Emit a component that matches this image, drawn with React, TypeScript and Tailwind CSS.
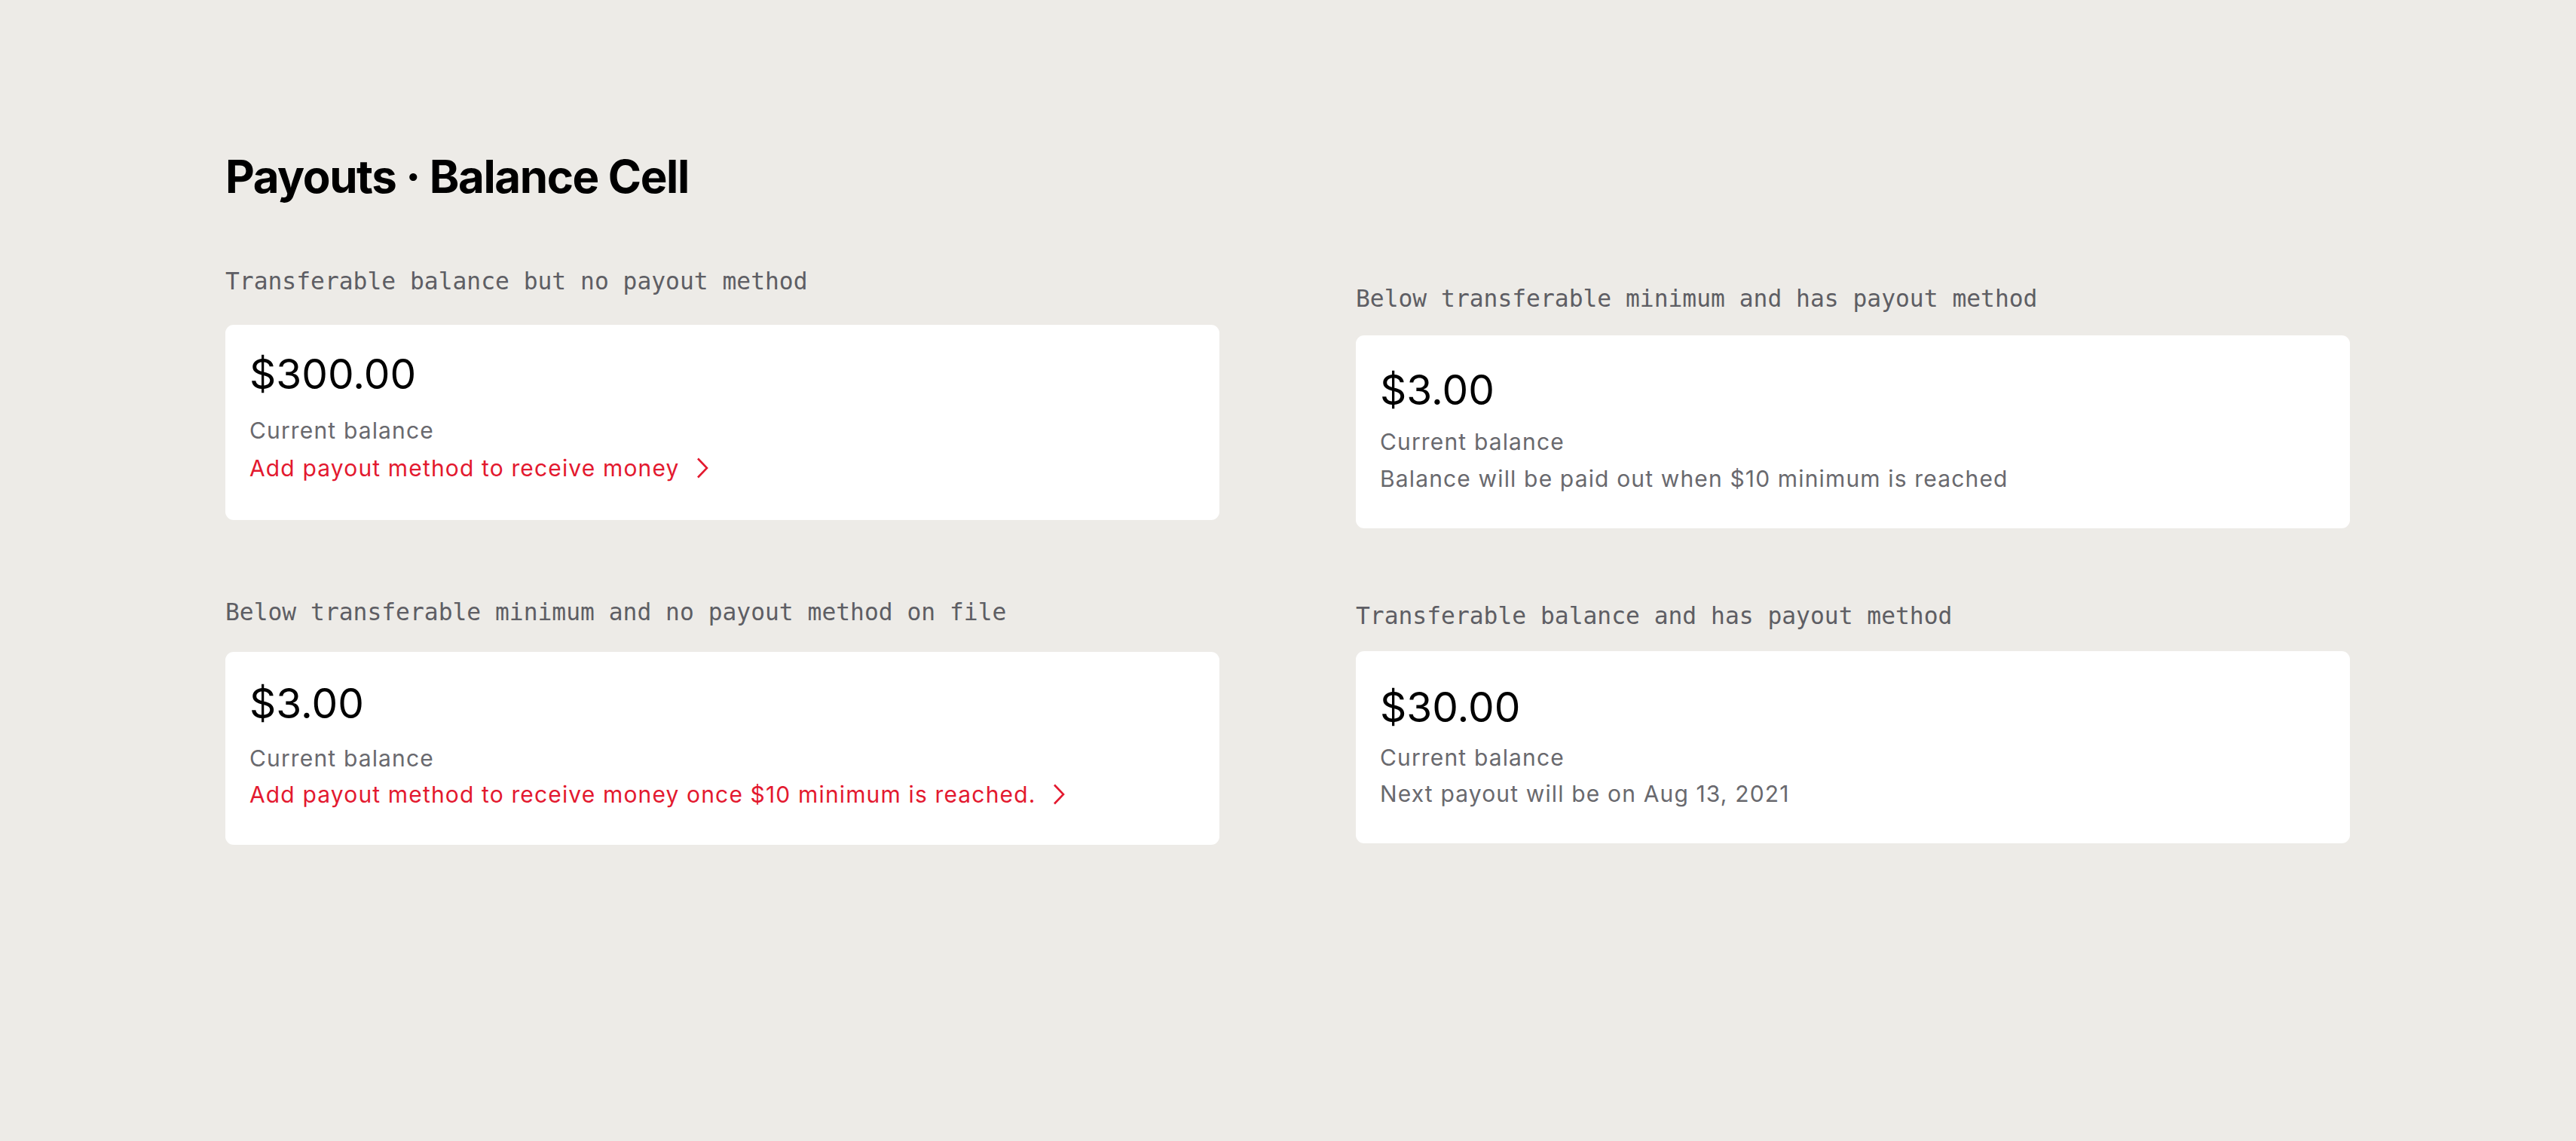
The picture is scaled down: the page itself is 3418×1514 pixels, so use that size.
import React from "react";

const Chevron = () => (
  <svg
    width="16"
    height="28"
    viewBox="0 0 16 28"
    fill="none"
    className="ml-[22px] shrink-0"
    aria-hidden="true"
  >
    <path d="M2 1.5 L14 14 L2 26.5" stroke="#e3192f" strokeWidth="2.6" strokeLinecap="butt" strokeLinejoin="miter" />
  </svg>
);

const monoLabel =
  "font-['DejaVu_Sans_Mono','Liberation_Mono',monospace] text-[31.3px] leading-[40px] text-[#5e5e64]";

const body = "text-[30px] tracking-[1.15px]";

export default function App() {
  return (
    <div className="min-h-[1514px] w-full bg-[#edebe7] font-['Inter','Noto_Sans',sans-serif] text-black">
      <div className="pl-[299px] pr-[300px] pt-[204px]">
        <h1 className="text-[60px] font-bold leading-[60px] tracking-[-1.4px] text-black">
          Payouts · Balance Cell
        </h1>

        <div className="mt-[89px] grid grid-cols-2 gap-x-[181px] items-start">
          {/* Row 1 left */}
          <div className="flex flex-col">
            <div className={monoLabel}>Transferable balance but no payout method</div>
            <div className="mt-[38px] rounded-[11px] bg-white pl-[32px] pt-[38px] pb-[44px]">
              <div className="text-[55px] leading-[55px] text-black">$300.00</div>
              <div className={`mt-[22px] ${body} leading-[50px] text-[#69696e]`}>Current balance</div>
              <div className={`flex items-center ${body} leading-[50px] text-[#e3192f]`}>
                <span>Add payout method to receive money</span>
                <Chevron />
              </div>
            </div>
          </div>

          {/* Row 1 right */}
          <div className="mt-[23px] flex flex-col">
            <div className={monoLabel}>Below transferable minimum and has payout method</div>
            <div className="mt-[29px] rounded-[11px] bg-white pl-[32px] pt-[45px] pb-[41px]">
              <div className="text-[55px] leading-[55px] text-black">$3.00</div>
              <div className={`mt-[17px] ${body} leading-[49px] text-[#69696e]`}>Current balance</div>
              <div className={`${body} leading-[49px] text-[#69696e]`}>
                Balance will be paid out when $10 minimum is reached
              </div>
            </div>
          </div>

          {/* Row 2 left */}
          <div className="mt-[91px] flex flex-col">
            <div className={monoLabel}>Below transferable minimum and no payout method on file</div>
            <div className="mt-[33px] rounded-[11px] bg-white pl-[32px] pt-[41px] pb-[43px]">
              <div className="text-[55px] leading-[55px] text-black">$3.00</div>
              <div className={`mt-[21px] ${body} leading-[48px] text-[#69696e]`}>Current balance</div>
              <div className={`flex items-center ${body} leading-[48px] text-[#e3192f]`}>
                <span>Add payout method to receive money once $10 minimum is reached.</span>
                <Chevron />
              </div>
            </div>
          </div>

          {/* Row 2 right */}
          <div className="mt-[96px] flex flex-col">
            <div className={monoLabel}>Transferable balance and has payout method</div>
            <div className="mt-[27px] rounded-[11px] bg-white pl-[32px] pt-[47px] pb-[42px]">
              <div className="text-[55px] leading-[55px] text-black">$30.00</div>
              <div className={`mt-[15px] ${body} leading-[48px] text-[#69696e]`}>Current balance</div>
              <div className={`${body} leading-[48px] text-[#69696e]`}>
                Next payout will be on Aug 13, 2021
              </div>
            </div>
          </div>
        </div>
      </div>
    </div>
  );
}
